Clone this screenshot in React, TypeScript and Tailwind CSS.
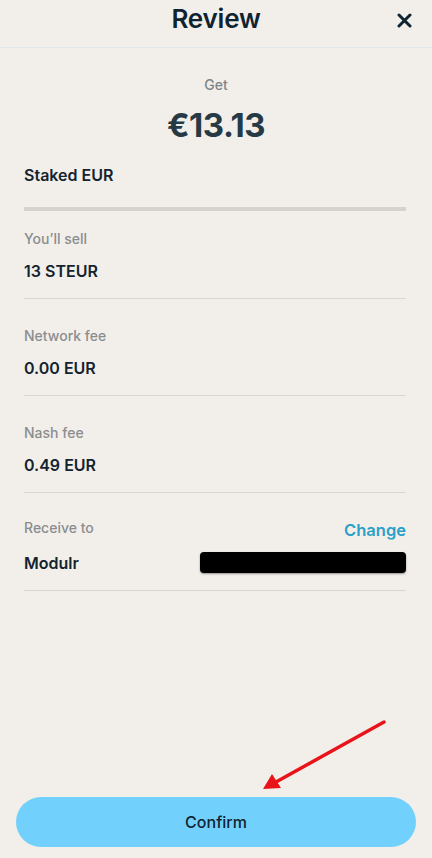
import React from "react";

function Row({ label, value, first }: { label: string; value: string; first?: boolean }) {
  return (
    <div className={"flex flex-col border-b border-[#d9d5d1] pb-[17px] " + (first ? "pt-[18px]" : "pt-[27px]")}>
      <div className="text-[14px] leading-[20px] text-[#8a8d8f] font-medium">{label}</div>
      <div className="mt-[12px] text-[16px] leading-[20px] font-semibold text-[#14232e]">{value}</div>
    </div>
  );
}

export default function App() {
  return (
    <div
      className="relative w-[432px] h-[858px] bg-[#f2efeb] flex flex-col overflow-hidden"
      style={{ fontFamily: "Inter, 'Noto Sans', sans-serif" }}
    >
      <header className="relative h-[48px] flex items-center justify-center border-b border-[#e1e9ea]">
        <h1 className="text-[26px] font-semibold text-[#0f2330] tracking-[-0.2px] -mt-[10px]">Review</h1>
        <svg
          className="absolute right-[20px] top-[13px]"
          width="15"
          height="15"
          viewBox="0 0 15 15"
        >
          <path d="M2 2 L13 13 M13 2 L2 13" stroke="#0f2330" strokeWidth="3" strokeLinecap="round" />
        </svg>
      </header>

      <div className="flex flex-col items-center pt-[27px]">
        <div className="text-[14px] leading-[20px] text-[#7f8588] font-medium">Get</div>
        <div className="mt-[10px] text-[33px] leading-[40px] font-bold text-[#263a45] tracking-[-0.5px]">€13.13</div>
      </div>

      <div className="pl-[24px] pr-[26px] flex flex-col">
        <div className="pt-[20px] pb-[22px] text-[16px] leading-[20px] font-semibold text-[#14232e]">Staked EUR</div>
        <div className="h-[4px] bg-[#d6d2ce]" />
        <Row first label="You’ll sell" value="13 STEUR" />
        <Row label="Network fee" value="0.00 EUR" />
        <Row label="Nash fee" value="0.49 EUR" />
        <div className="flex flex-col border-b border-[#d9d5d1] pt-[25px] pb-[17px]">
          <div className="flex items-start justify-between">
            <div className="text-[14px] leading-[20px] text-[#8a8d8f] font-medium">Receive to</div>
            <div className="mt-[2px] text-[16.5px] leading-[20px] font-semibold text-[#2aa0c8]">Change</div>
          </div>
          <div className="mt-[12px] flex items-center justify-between">
            <div className="text-[16px] leading-[20px] font-semibold text-[#14232e]">Modulr</div>
            <div className="w-[206px] h-[21px] bg-black rounded-[4px] shadow-[0_1px_2px_rgba(0,0,0,0.4)]" />
          </div>
        </div>
      </div>

      <div className="flex-1" />

      <div className="px-[16px] pb-[11px]">
        <button className="w-full h-[50px] rounded-full bg-[#72d1fc] text-[16px] font-medium text-[#0f2330]">
          Confirm
        </button>
      </div>

      <svg className="absolute left-0 top-0 pointer-events-none" width="432" height="858">
        <line x1="384" y1="722" x2="276" y2="782" stroke="#e8141a" strokeWidth="3.5" strokeLinecap="round" />
        <polygon points="263,789 272,774 281,788" fill="#e8141a" />
      </svg>
    </div>
  );
}
